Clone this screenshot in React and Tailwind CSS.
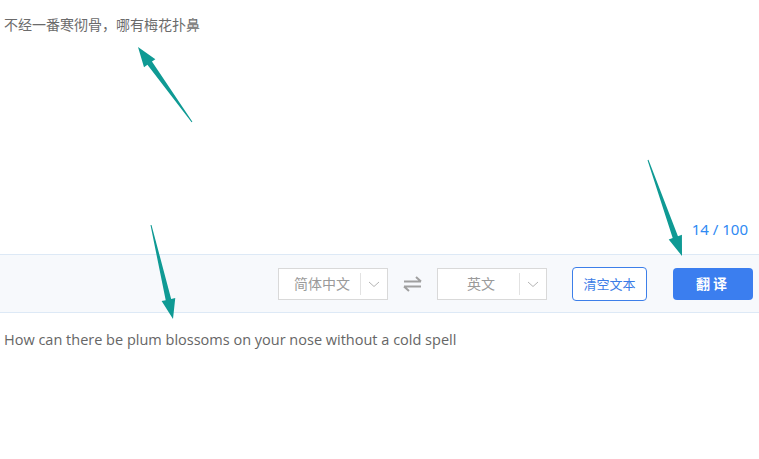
import React from 'react';

// annotation arrows drawn over the page
const arrows = [
  { from: [192, 122], to: [138, 47] },
  { from: [151, 225], to: [173, 319] },
  { from: [648, 160], to: [682, 256] },
];

const arrowPoints = ({ from, to }) => {
  const [x1, y1] = from;
  const [x2, y2] = to;
  const len = Math.hypot(x2 - x1, y2 - y1);
  const dx = (x2 - x1) / len;
  const dy = (y2 - y1) / len;
  const px = -dy;
  const py = dx;
  const headLen = 20;
  const nx = x2 - dx * headLen;
  const ny = y2 - dy * headLen;
  const pts = [
    [x1 + px * 0.5, y1 + py * 0.5],
    [nx + px * 2.8, ny + py * 2.8],
    [nx + px * 7, ny + py * 7],
    [x2, y2],
    [nx - px * 7, ny - py * 7],
    [nx - px * 2.8, ny - py * 2.8],
    [x1 - px * 0.5, y1 - py * 0.5],
  ];
  return pts.map((p) => p.join(',')).join(' ');
};

const Select = ({ label }) => (
  <div className="flex items-center w-[110px] h-[32px] bg-white border border-[#d9d9d9]">
    <span className="flex-1 pl-[5px] text-center text-[14px] text-[#9a9a9a]">{label}</span>
    <span className="w-px h-[22px] bg-[#e2e2e2]" />
    <svg className="w-[26px] h-[12px] text-[#b5b5b5]" viewBox="0 0 26 12" fill="none" stroke="currentColor" strokeWidth="1">
      <path d="M8 4l5 4.5L18 4" />
    </svg>
  </div>
);

const App = () => {
  return (
    <div className="relative w-[759px] h-[459px] bg-white overflow-hidden font-['Noto_Sans','Noto_Sans_CJK_SC',sans-serif]">
      <div className="flex flex-col h-[254px] px-[4px] pt-[14px] pb-[14px]">
        <p className="flex-1 text-[14px] text-[#6b6b6b] font-['Noto_Sans_CJK_SC',sans-serif]">不经一番寒彻骨，哪有梅花扑鼻</p>
        <div className="text-right pr-[7px] text-[15px] text-[#2f8af3]">14 / 100</div>
      </div>

      <div className="flex items-center justify-end h-[59px] pr-[6px] bg-[#f7f9fc] border-y border-[#dde9f6] font-['Noto_Sans_CJK_SC',sans-serif]">
        <Select label="简体中文" />
        <svg className="mx-[15px] w-[19px] h-[16px] text-[#a0a0a0]" viewBox="0 0 19 16" fill="none" stroke="currentColor" strokeWidth="2">
          <path d="M1 5.5h17M13 1l5 4.5" />
          <path d="M18 10.5H1M6 15l-5-4.5" />
        </svg>
        <Select label="英文" />
        <button type="button" className="ml-[25px] w-[75px] h-[34px] rounded-[4px] border border-[#3d7fe9] bg-white text-[13px] text-[#3b7ce6]">
          清空文本
        </button>
        <button type="button" className="ml-[26px] w-[80px] h-[32px] rounded-[4px] bg-[#3b7eef] text-[14px] font-bold text-white tracking-[3px]">
          翻译
        </button>
      </div>

      <p className="px-[4px] pt-[16px] text-[14.5px] text-[#666] font-['Open_Sans',sans-serif]">
        How can there be plum blossoms on your nose without a cold spell
      </p>

      <svg className="absolute inset-0 pointer-events-none" width="759" height="459">
        {arrows.map((a, i) => (
          <polygon key={i} points={arrowPoints(a)} fill="#0f9a94" />
        ))}
      </svg>
    </div>
  );
};

export default App;
